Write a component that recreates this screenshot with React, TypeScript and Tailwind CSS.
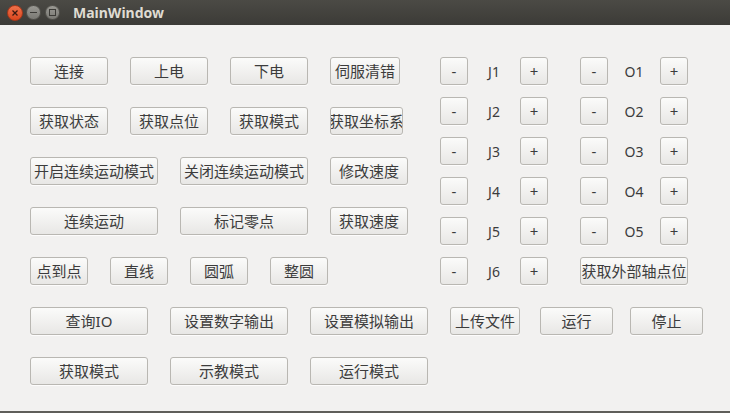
import React from "react";

const FONT = { fontFamily: '"Noto Sans", "Noto Sans CJK SC", sans-serif' };

function Btn({ label, w, className = "" }: { label: string; w: string; className?: string }) {
  return (
    <div
      className={`h-[28px] ${w} shrink-0 flex items-center justify-center rounded-[3px] border border-[#b9b7b2] bg-gradient-to-b from-[#fbfbfa] to-[#e8e7e5] text-[15px] leading-none text-[#3c3c3c] whitespace-nowrap overflow-hidden shadow-[0_1px_0_rgba(255,255,255,0.8)] ${className}`}
    >
      {label}
    </div>
  );
}

function Label({ text }: { text: string }) {
  return (
    <div className="h-[28px] w-[52px] flex items-center justify-center text-[14px] text-[#3c3c3c]">
      {text}
    </div>
  );
}

export default function App() {
  const jRows = ["J1", "J2", "J3", "J4", "J5", "J6"];
  const oRows = ["O1", "O2", "O3", "O4", "O5"];
  return (
    <div className="w-[730px] h-[413px] flex flex-col bg-[#f2f1f0] overflow-hidden" style={FONT}>
      {/* title bar */}
      <div className="h-[25px] shrink-0 flex items-center bg-gradient-to-b from-[#4b4a45] to-[#3c3b37]">
        <div className="ml-[7px] w-[16px] h-[16px] rounded-full bg-gradient-to-b from-[#f0714a] to-[#d9461c] border border-[#a8371a] flex items-center justify-center">
          <svg width="8" height="8" viewBox="0 0 8 8">
            <path d="M1.5 1.5 L6.5 6.5 M6.5 1.5 L1.5 6.5" stroke="#3a1a10" strokeWidth="1.3" />
          </svg>
        </div>
        <div className="ml-[3px] w-[15px] h-[15px] rounded-full bg-gradient-to-b from-[#9a9993] to-[#7a7974] border border-[#55544f] flex items-center justify-center">
          <div className="w-[7px] h-[1.5px] bg-[#3c3b37]" />
        </div>
        <div className="ml-[4px] w-[15px] h-[15px] rounded-full bg-gradient-to-b from-[#9a9993] to-[#7a7974] border border-[#55544f] flex items-center justify-center">
          <div className="w-[7px] h-[7px] border border-[#3c3b37]" />
        </div>
        <div className="ml-[13px] text-[14px] font-bold text-[#dfdbd2]" style={{ fontFamily: '"Noto Sans", sans-serif' }}>
          MainWindow
        </div>
      </div>

      {/* body */}
      <div className="flex-1 flex flex-col pt-[32px]">
        <div className="flex">
          {/* left column */}
          <div className="w-[440px] pl-[30px] flex flex-col gap-[22px]">
            <div className="flex">
              <Btn label="连接" w="w-[78px]" />
              <Btn label="上电" w="w-[78px]" className="ml-[22px]" />
              <Btn label="下电" w="w-[78px]" className="ml-[22px]" />
              <Btn label="伺服清错" w="w-[70px]" className="ml-[22px]" />
            </div>
            <div className="flex">
              <Btn label="获取状态" w="w-[78px]" />
              <Btn label="获取点位" w="w-[78px]" className="ml-[22px]" />
              <Btn label="获取模式" w="w-[78px]" className="ml-[22px]" />
              <Btn label="获取坐标系" w="w-[73px]" className="ml-[22px]" />
            </div>
            <div className="flex">
              <Btn label="开启连续运动模式" w="w-[128px]" />
              <Btn label="关闭连续运动模式" w="w-[128px]" className="ml-[22px]" />
              <Btn label="修改速度" w="w-[78px]" className="ml-[22px]" />
            </div>
            <div className="flex">
              <Btn label="连续运动" w="w-[128px]" />
              <Btn label="标记零点" w="w-[128px]" className="ml-[22px]" />
              <Btn label="获取速度" w="w-[78px]" className="ml-[22px]" />
            </div>
            <div className="flex">
              <Btn label="点到点" w="w-[58px]" />
              <Btn label="直线" w="w-[58px]" className="ml-[22px]" />
              <Btn label="圆弧" w="w-[58px]" className="ml-[22px]" />
              <Btn label="整圆" w="w-[58px]" className="ml-[22px]" />
            </div>
          </div>

          {/* J column */}
          <div className="flex flex-col gap-[12px]">
            {jRows.map((j) => (
              <div key={j} className="flex">
                <Btn label="-" w="w-[28px]" />
                <Label text={j} />
                <Btn label="+" w="w-[28px]" />
              </div>
            ))}
          </div>

          {/* O column */}
          <div className="ml-[32px] flex flex-col gap-[12px]">
            {oRows.map((o) => (
              <div key={o} className="flex">
                <Btn label="-" w="w-[28px]" />
                <Label text={o} />
                <Btn label="+" w="w-[28px]" />
              </div>
            ))}
            <Btn label="获取外部轴点位" w="w-[108px]" />
          </div>
        </div>

        <div className="flex pl-[30px] mt-[22px]">
          <Btn label="查询IO" w="w-[118px]" />
          <Btn label="设置数字输出" w="w-[118px]" className="ml-[22px]" />
          <Btn label="设置模拟输出" w="w-[118px]" className="ml-[22px]" />
          <Btn label="上传文件" w="w-[70px]" className="ml-[22px]" />
          <Btn label="运行" w="w-[73px]" className="ml-[20px]" />
          <Btn label="停止" w="w-[73px]" className="ml-[17px]" />
        </div>
        <div className="flex pl-[30px] mt-[22px]">
          <Btn label="获取模式" w="w-[118px]" />
          <Btn label="示教模式" w="w-[118px]" className="ml-[22px]" />
          <Btn label="运行模式" w="w-[118px]" className="ml-[22px]" />
        </div>
      </div>
      <div className="h-[2px] shrink-0 bg-[#5f5e5a]" />
    </div>
  );
}
